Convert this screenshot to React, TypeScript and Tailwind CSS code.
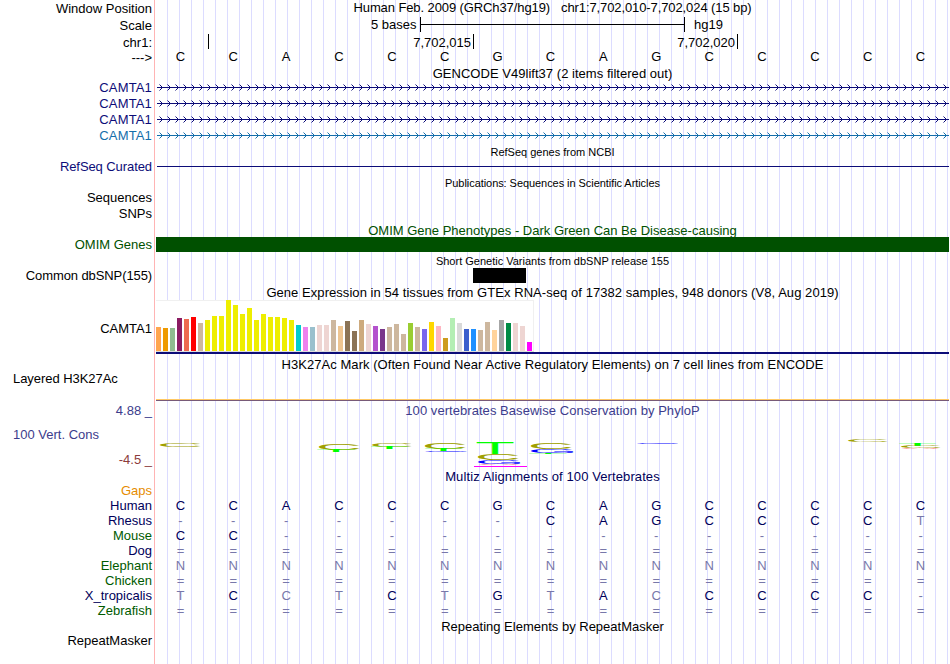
import React from 'react';
import clsx from 'clsx';

const BARS: [number, string][] = [
  [24, '#ffa54f'], [23, '#ee9a00'], [23, '#8fbc8f'], [33, '#8b1c62'], [32, '#ee6a50'], [34, '#ff0000'],
  [28, '#cdb79e'], [31, '#eeee00'], [35, '#eeee00'], [35, '#eeee00'], [51, '#eeee00'], [46, '#eeee00'],
  [37, '#eeee00'], [43, '#eeee00'], [31, '#eeee00'], [37, '#eeee00'], [34, '#eeee00'], [34, '#eeee00'],
  [33, '#eeee00'], [31, '#eeee00'], [26, '#00cdcd'], [24, '#ee82ee'], [24, '#9ac0cd'], [26, '#eed5d2'],
  [26, '#eed5d2'], [31, '#cdb79e'], [25, '#eec591'], [30, '#8b7355'], [20, '#8b7355'], [31, '#cdaa7d'],
  [27, '#eed5d2'], [25, '#b452cd'], [22, '#7a378b'], [24, '#cdb79e'], [27, '#cdb79e'], [17, '#cdb79e'],
  [28, '#9acd32'], [24, '#cdb79e'], [22, '#7a67ee'], [29, '#ffd700'], [25, '#ffb6c1'], [13, '#cd9b1d'],
  [33, '#b4eeb4'], [28, '#d9d9d9'], [22, '#3a5fcd'], [22, '#1e90ff'], [21, '#cdb79e'], [29, '#cdb79e'],
  [21, '#ffd39b'], [31, '#a6a6a6'], [28, '#008b45'], [28, '#eed5d2'], [25, '#eed5d2'], [9, '#ff00ff'],
];

// lower case letters are mismatches and get the lighter colour
const SPECIES = [
  { name: 'Human', color: 'text-[#00005a]', bases: 'CCACCCGCAGCCCCC' },
  { name: 'Rhesus', color: 'text-[#00005a]', bases: '-------CAGCCCCt' },
  { name: 'Mouse', color: 'text-[#005a00]', bases: 'CC-------------' },
  { name: 'Dog', color: 'text-[#00005a]', bases: '===============' },
  { name: 'Elephant', color: 'text-[#005a00]', bases: 'nnnnnnnnnnnnnnn' },
  { name: 'Chicken', color: 'text-[#005a00]', bases: '===============' },
  { name: 'X_tropicalis', color: 'text-[#00005a]', bases: 'tCctCtGtAcCCCC-' },
  { name: 'Zebrafish', color: 'text-[#005a00]', bases: '===============' },
];

const GENES = [
  { label: 'text-[#0c0c78]', line: '#0c0c78' },
  { label: 'text-[#0c0c78]', line: '#0c0c78' },
  { label: 'text-[#0c0c78]', line: '#0c0c78' },
  { label: 'text-[#146eaa]', line: '#146eaa' },
];

type RowProps = { h: string; label?: string; labelClass?: string; children?: React.ReactNode };

function Row({ h, label, labelClass, children }: RowProps) {
  return (
    <div className={clsx('flex w-[949px] shrink-0', h)}>
      <div className={clsx('flex w-[156px] shrink-0 items-center justify-end pr-1 leading-none', labelClass)}>{label}</div>
      <div className="w-[793px]">{children}</div>
    </div>
  );
}

type TitleProps = { h: string; small?: boolean; className?: string; children: React.ReactNode };

function Title({ h, small, className, children }: TitleProps) {
  return (
    <Row h={h}>
      <h6 className={clsx('flex h-full items-center justify-center whitespace-nowrap leading-none', small ? 'text-[11px]' : 'text-[13px]', className)}>
        {children}
      </h6>
    </Row>
  );
}

function Bases({ bases, color }: { bases: string; color?: string }) {
  return (
    <div className="-ml-0.5 mr-0.5 grid h-full grid-cols-15 items-center text-center leading-none">
      {bases.split('').map((b, i) => (
        <span key={i} className={clsx('pb-0.5', /[a-z=-]/.test(b) ? 'text-[#7878aa]' : color)}>
          {b.toUpperCase()}
        </span>
      ))}
    </div>
  );
}

function Arrows({ id, color }: { id: string; color: string }) {
  return (
    <svg className="block" width="793" height="16">
      <defs>
        <pattern id={id} x="1" width="8" height="16" patternUnits="userSpaceOnUse">
          <path d="M2.5 4.5L5.5 7.5L2.5 10.5" fill="none" stroke={color} strokeWidth="1" />
        </pattern>
      </defs>
      <rect x="1" y="7" width="792" height="1" fill={color} />
      <rect x="1" width="792" height="16" fill={`url(#${id})`} />
    </svg>
  );
}

// ink box of each letter at font-size 100
const INK: Record<string, [number, number, number, number]> = {
  C: [5, -70, 64, 71],
  G: [5, -70, 67, 71],
  T: [2, -69, 57, 69],
  A: [0, -69, 66, 69],
};

const LOGO: [string, string, number, number, number, number][] = [
  ['C', '#a0a000', 160, 443, 41, 4],
  ['C', '#a0a000', 319, 443, 41, 7],
  ['T', '#00ff00', 317, 450, 38, 2],
  ['C', '#a0a000', 372, 443, 40, 4],
  ['T', '#00ff00', 371, 447, 37, 2],
  ['C', '#a0a000', 425, 443, 41, 6],
  ['T', '#00ff00', 425, 449, 37, 2],
  ['G', '#0000ff', 425, 451, 43, 1],
  ['T', '#00ff00', 476.5, 443, 37, 11],
  ['C', '#a0a000', 478, 454, 41, 6],
  ['G', '#0000ff', 478, 460, 43, 4],
  ['A', '#ff0000', 478, 464, 41, 1],
  ['C', '#a0a000', 531, 443, 41, 6],
  ['G', '#0000ff', 531, 449, 43, 4],
  ['T', '#00ff00', 529, 453, 38, 1],
  ['G', '#0000ff', 637, 443, 42, 1],
  ['C', '#a0a000', 848, 440, 40, 2],
  ['T', '#00ff00', 899, 443, 37, 3],
  ['C', '#a0a000', 901, 446, 40, 2],
  ['A', '#ff0000', 901, 448, 38, 1],
];

function PhyloLogo() {
  return (
    <svg className="block" width="793" height="51" viewBox="156 418 793 51" fontSize="100">
      {LOGO.map(([ch, color, x, y, w, h], i) => {
        const [ix, iy, iw, ih] = INK[ch];
        const sx = w / iw;
        const sy = h / ih;
        return (
          <text key={i} fill={color} transform={`translate(${x - ix * sx} ${y - iy * sy}) scale(${sx} ${sy})`}>{ch}</text>
        );
      })}
      <rect x="474" y="466" width="53" height="1" fill="#ff00ff" />
    </svg>
  );
}

export default function App() {
  return (
    <main className="h-[664px] w-[950px] overflow-hidden bg-white font-['Liberation_Sans',Arial,sans-serif] text-[13px] text-black">
      {/* guide lines sit behind every track, 12px apart */}
      <div className="h-full w-[949px] bg-[linear-gradient(to_right,#dcdcff_1px,transparent_1px)] bg-[length:12px_100%] bg-[position:11px_0]">
        <div className="flex h-full flex-col bg-[linear-gradient(to_right,#fff_154px,#ffb4b4_154px,#ffb4b4_155px,#fff_155px,#fff_156px,transparent_156px)]">
          <Row h="h-4" label="Window Position">
            <p className="flex h-[15px] items-center justify-center gap-[11px] leading-none tracking-[-0.1px]">
              <span>Human Feb. 2009 (GRCh37/hg19)</span>
              <span>chr1:7,702,010-7,702,024 (15 bp)</span>
            </p>
          </Row>
          <Row h="h-[17px]" label="Scale" labelClass="pt-0.5">
            <div className="flex h-full items-center pl-[215px] leading-none">
              <span className="w-[49px]">5 bases</span>
              <div className="flex h-[15px] w-[265px] items-center border-x border-black">
                <div className="h-px w-full bg-black" />
              </div>
              <span className="ml-[9px]">hg19</span>
            </div>
          </Row>
          <Row h="h-[17px]" label="chr1:" labelClass="pt-0.5">
            <div className="flex h-full items-center leading-none">
              <div className="h-[15px] w-[53px] border-r border-black" />
              <div className="flex h-[15px] w-[265px] items-center justify-end border-r border-black pr-0.5 pt-px">7,702,015</div>
              <div className="flex h-[15px] w-[264px] items-center justify-end border-r border-black pr-0.5 pt-px">7,702,020</div>
            </div>
          </Row>
          <Row h="h-[15px]" label="--->">
            <Bases bases="CCACCCGCAGCCCCC" />
          </Row>
          <Title h="h-[15px]" className="pt-0.5 tracking-[0.03px]">GENCODE V49lift37 (2 items filtered out)</Title>
          {GENES.map((g, i) => (
            <Row key={i} h="h-4" label="CAMTA1" labelClass={clsx('pb-0.5 tracking-[0.15px]', g.label)}>
              <Arrows id={`arrows${i}`} color={g.line} />
            </Row>
          ))}
          <Title h="h-4" small>RefSeq genes from NCBI</Title>
          <Row h="h-[14px]" label="RefSeq Curated" labelClass="pb-0.5 tracking-[-0.08px] text-[#0c0c78]">
            <div className="flex h-full pl-px pt-1.5">
              <div className="h-px w-full bg-[#0c0c78]" />
            </div>
          </Row>
          <Title h="h-4" small className="pt-0.5 tracking-[-0.06px]">Publications: Sequences in Scientific Articles</Title>
          <Row h="h-4" label="Sequences" labelClass="pb-0.5" />
          <Row h="h-4" label="SNPs" labelClass="pb-0.5" />
          <Title h="h-[15px]" className="pt-0.5 text-[#005000]">OMIM Gene Phenotypes - Dark Green Can Be Disease-causing</Title>
          <Row h="h-[15px]" label="OMIM Genes" labelClass="text-[#005000]">
            <div className="h-full bg-[#005000]" />
          </Row>
          <Title h="h-4" small className="pt-0.5">Short Genetic Variants from dbSNP release 155</Title>
          <Row h="h-[15px]" label="Common dbSNP(155)" labelClass="tracking-[-0.1px]">
            <div className="ml-[317px] h-full w-[53px] bg-black" />
          </Row>
          <Title h="h-[17px]" className="pt-0.5 tracking-[0.055px]">
            Gene Expression in 54 tissues from GTEx RNA-seq of 17382 samples, 948 donors (V8, Aug 2019)
          </Title>
          <Row h="h-14" label="CAMTA1">
            <div className="flex h-[52px] w-[378px] items-end gap-0.5 border-b border-[#dcdcdc] bg-white shadow-[inset_-1px_1px_0_#f0f0f0]">
              {BARS.map(([height, color], i) => (
                <div key={i} className="w-[5px] shrink-0" style={{ height, backgroundColor: color }} />
              ))}
            </div>
            <div className="h-0.5 bg-[#0c0c78]" />
          </Row>
          <Title h="h-[17px]" className="tracking-[0.05px]">
            H3K27Ac Mark (Often Found Near Active Regulatory Elements) on 7 cell lines from ENCODE
          </Title>
          <div className="flex h-[29px] w-[949px]">
            <div className="w-[156px] pl-[13px] leading-3 tracking-[-0.05px]">Layered H3K27Ac</div>
            <div className="flex w-[793px] flex-col pt-[26px]">
              <div className="h-px bg-[#ffc864]" />
              <div className="h-px bg-[#785a78]" />
            </div>
          </div>
          <Row h="h-4" label="4.88 _" labelClass="text-[#3c3c8c]">
            <h6 className="flex h-full items-center justify-center leading-none tracking-[0.05px] text-[#3c3c8c]">
              100 vertebrates Basewise Conservation by PhyloP
            </h6>
          </Row>
          <div className="flex h-[51px] w-[949px]">
            <div className="flex w-[156px] flex-col justify-between pb-px pt-[9px] leading-4">
              <span className="pl-[13px] text-[#3c3c8c]">100 Vert. Cons</span>
              <span className="pr-1 text-right text-[#8c3c3c]">-4.5 _</span>
            </div>
            <PhyloLogo />
          </div>
          <Title h="h-[15px]" className="tracking-[0.1px] text-[#00005a]">Multiz Alignments of 100 Vertebrates</Title>
          <Row h="h-[15px]" label="Gaps" labelClass="pb-0.5 text-[#e68c00]" />
          {SPECIES.map((s) => (
            <Row key={s.name} h="h-[15px]" label={s.name} labelClass={clsx('pb-0.5', s.color)}>
              <Bases bases={s.bases} color="text-[#00005a]" />
            </Row>
          ))}
          <Title h="h-[15px]">Repeating Elements by RepeatMasker</Title>
          <Row h="h-[15px]" label="RepeatMasker" labelClass="pb-0.5" />
        </div>
      </div>
    </main>
  );
}
